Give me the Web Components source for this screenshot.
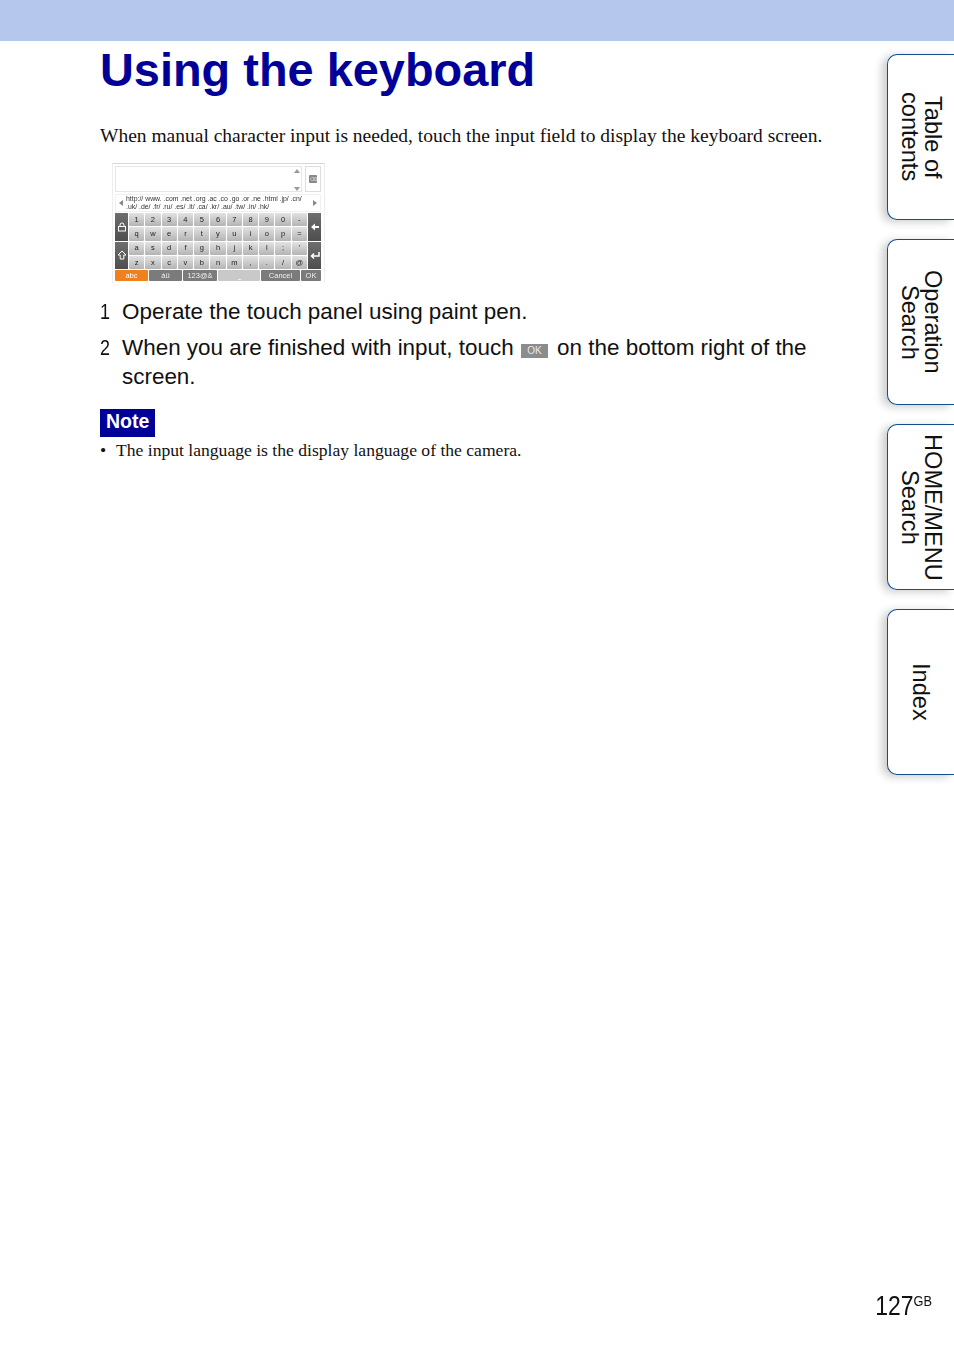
<!DOCTYPE html>
<html><head><meta charset="utf-8">
<style>
html,body{margin:0;padding:0;background:#fff}
body{width:954px;height:1369px;overflow:hidden}
</style></head>
<body>
<manual-page>
  <page-title slot="title">Using the keyboard</page-title>
  <kbd-shot slot="shot"></kbd-shot>
  <side-tab slot="tabs">Table of<br>contents</side-tab>
  <side-tab slot="tabs">Operation<br>Search</side-tab>
  <side-tab slot="tabs">HOME/MENU<br>Search</side-tab>
  <side-tab slot="tabs">Index</side-tab>
</manual-page>
<script>
function def(name,html,after){
  customElements.define(name,class extends HTMLElement{
    constructor(){super();this.attachShadow({mode:'open'}).innerHTML=html;}
    connectedCallback(){if(after)after(this.shadowRoot);}
  });
}
def('page-title',`<style>:host{display:block;font:bold 46.9px/58px "Liberation Sans",Arial,sans-serif;color:#000099}</style><slot></slot>`);

def('side-tab',`<style>
:host{display:flex;box-sizing:border-box;width:67px;height:166px;border:1.5px solid #0f4f96;border-right:0;border-radius:10px 0 0 10px;background:#fff;
box-shadow:-5px 2px 8px rgba(0,0,0,.2);align-items:center;justify-content:center;
font:23.6px/23.5px "Liberation Sans",Arial,sans-serif;color:#111;writing-mode:vertical-rl;text-align:center;padding-right:1px}
</style><slot></slot>`);

def('kbd-key',`<style>:host{display:flex;align-items:center;justify-content:center;background:var(--k,linear-gradient(#e2e2e2,#b4b4b4));color:var(--c,#222);font:7.5px/1 "Liberation Sans",Arial,sans-serif;border-radius:1px;min-width:0}</style><slot></slot>`);

def('kbd-shot',`<style>
:host{display:block;box-sizing:border-box;width:213px;height:120px;border-top:1px solid #d8d8d8;border-left:1px solid #eee;border-right:1px solid #eee;background:#fff;padding:2px 3px 1px 2px;font-family:"Liberation Sans",Arial,sans-serif;filter:blur(.35px)}
.top{display:flex;gap:3px;height:26px}
.in{flex:1;border:1px solid #e6e6e6;position:relative}
.up,.dn{position:absolute;right:1px;width:0;height:0;border-left:3.5px solid transparent;border-right:3.5px solid transparent}
.up{top:2px;border-bottom:4px solid #999}.dn{bottom:0;border-top:4px solid #999}
.del{width:14px;border:1px solid #ddd;display:flex;align-items:center;justify-content:center}
.del i{display:block;width:8px;height:8px;background:#888;border-radius:1px;font:normal 5px/8px "Liberation Sans",sans-serif;color:#eee;text-align:center}
.url{display:flex;align-items:center;height:18px;margin-top:2px;border:1px solid #f0f0f0;box-sizing:border-box;font-size:6.9px;line-height:8px;color:#333;gap:3px;padding:0 3px}
.url p{margin:0;flex:1;white-space:nowrap}
.l{border-right:4px solid #888;border-top:3px solid transparent;border-bottom:3px solid transparent}
.r{border-left:4px solid #888;border-top:3px solid transparent;border-bottom:3px solid transparent}
.main{display:grid;grid-template-columns:13px 1fr 13px;height:56px;margin-top:1px}
.side{display:grid;grid-template-rows:1fr 1fr;gap:1px;background:#fff}
.side div{background:linear-gradient(#6e6e6e,#4e4e4e);display:flex;align-items:center;justify-content:center}
.side svg{width:10px;height:10px}
.keys{display:grid;grid-template-columns:repeat(11,1fr);grid-template-rows:repeat(4,1fr);gap:1px;padding:0 1px}
.bar{display:grid;grid-template-columns:33px 33px 34px 42px 39px 1fr;gap:0 1px;height:11px;margin-top:1px}
.bar kbd-key{--k:#7b7b7b;--c:#eee}
.bar .a{--k:#f0801e;--c:#fff}
.bar .s{--k:#c9c9c9}
</style>
<div class="top"><div class="in"><span class="up"></span><span class="dn"></span></div><div class="del"><i>⌫</i></div></div>
<div class="url"><span class="l"></span><p>http:// www. .com .net .org .ac .co .go .or .ne .html .jp/ .cn/<br>.uk/ .de/ .fr/ .ru/ .es/ .it/ .ca/ .kr/ .au/ .tw/ .in/ .hk/</p><span class="r"></span></div>
<div class="main">
 <div class="side"><div><svg viewBox="0 0 10 10" fill="none" stroke="#fff"><rect x="1.5" y="4.500" width="7" height="4.500"/><path d="M3 4.500V3a2 2 0 0 1 4 0v1.500"/></svg></div><div><svg viewBox="0 0 10 10" fill="none" stroke="#fff"><path d="M5 1 1 5h2.200v4h3.600V5H9z"/></svg></div></div>
 <div class="keys" id="k"></div>
 <div class="side"><div><svg viewBox="0 0 10 10" fill="#fff"><path d="M1 5l4-3.500V4h4v2H5v2.500z"/></svg></div><div><svg viewBox="0 0 10 10" fill="none" stroke="#fff" stroke-width="1.500"><path d="M9 2v4H2M4 3.500 1.500 6 4 8.500"/></svg></div></div>
</div>
<div class="bar"><kbd-key class="a">abc</kbd-key><kbd-key>áü</kbd-key><kbd-key>123@&amp;</kbd-key><kbd-key class="s">⎵</kbd-key><kbd-key>Cancel</kbd-key><kbd-key>OK</kbd-key></div>`,
function(r){
 const el=r.getElementById('k');
 if(el.childElementCount)return;
 ['1 2 3 4 5 6 7 8 9 0 -','q w e r t y u i o p =',"a s d f g h j k l ; '",'z x c v b n m , . / @'].forEach(row=>row.split(' ').forEach(t=>{const k=document.createElement('kbd-key');k.textContent=t;el.appendChild(k);}));
});

def('manual-page',`<style>
:host{display:block;width:954px;height:1369px;font-family:"Liberation Serif","Times New Roman",serif;color:#111}
.band{height:41px;background:#b5c7ec}
.body{display:flex;height:1328px}
.main{width:887px;box-sizing:border-box;padding-left:100px;display:flex;flex-direction:column}
.tabs{width:67px;display:flex;flex-direction:column;gap:19px;margin-top:13px}
.intro{margin:25px 0 0;font-size:19.5px;line-height:24px;white-space:nowrap}
.shot{margin:15px 0 0 12px}
ol{list-style:none;margin:14px 0 0;padding:0;font:22.45px/29px "Liberation Sans",Arial,sans-serif;width:720px}
li{display:grid;grid-template-columns:22px 1fr;margin-bottom:7px}
.n{display:inline-block;transform:scaleX(.8);transform-origin:left}
.ok{display:inline-flex;align-items:center;justify-content:center;width:27px;height:14px;background:#8c8c8c;color:#e8e8e8;font-size:10px;line-height:1;margin:0 3px 0 1px;vertical-align:1px}
.note{align-self:flex-start;margin-top:11px;width:55px;height:28px;box-sizing:border-box;background:#000099;color:#fff;font:bold 19.5px/24px "Liberation Sans",Arial,sans-serif;padding-left:6px}
.bul{display:grid;grid-template-columns:16px 1fr;font-size:17.6px;line-height:26px}
.foot{margin-top:auto;margin-bottom:47px;margin-right:-45px;text-align:right;font:27px/32px "Liberation Sans",Arial,sans-serif;color:#111;transform:scaleX(.85);transform-origin:right}
.foot sup{font-size:15px;line-height:0;vertical-align:9px}
</style>
<div class="band"></div>
<div class="body">
 <div class="main">
  <slot name="title"></slot>
  <p class="intro">When manual character input is needed, touch the input field to display the keyboard screen.</p>
  <div class="shot"><slot name="shot"></slot></div>
  <ol>
   <li><span class="n">1</span><span>Operate the touch panel using paint pen.</span></li>
   <li><span class="n">2</span><span>When you are finished with input, touch <span class="ok">OK</span> on the bottom right of the screen.</span></li>
  </ol>
  <div class="note">Note</div>
  <div class="bul"><span>•</span><span>The input language is the display language of the camera.</span></div>
  <div class="foot">127<sup>GB</sup></div>
 </div>
 <div class="tabs"><slot name="tabs"></slot></div>
</div>`);
</script>
</body></html>
